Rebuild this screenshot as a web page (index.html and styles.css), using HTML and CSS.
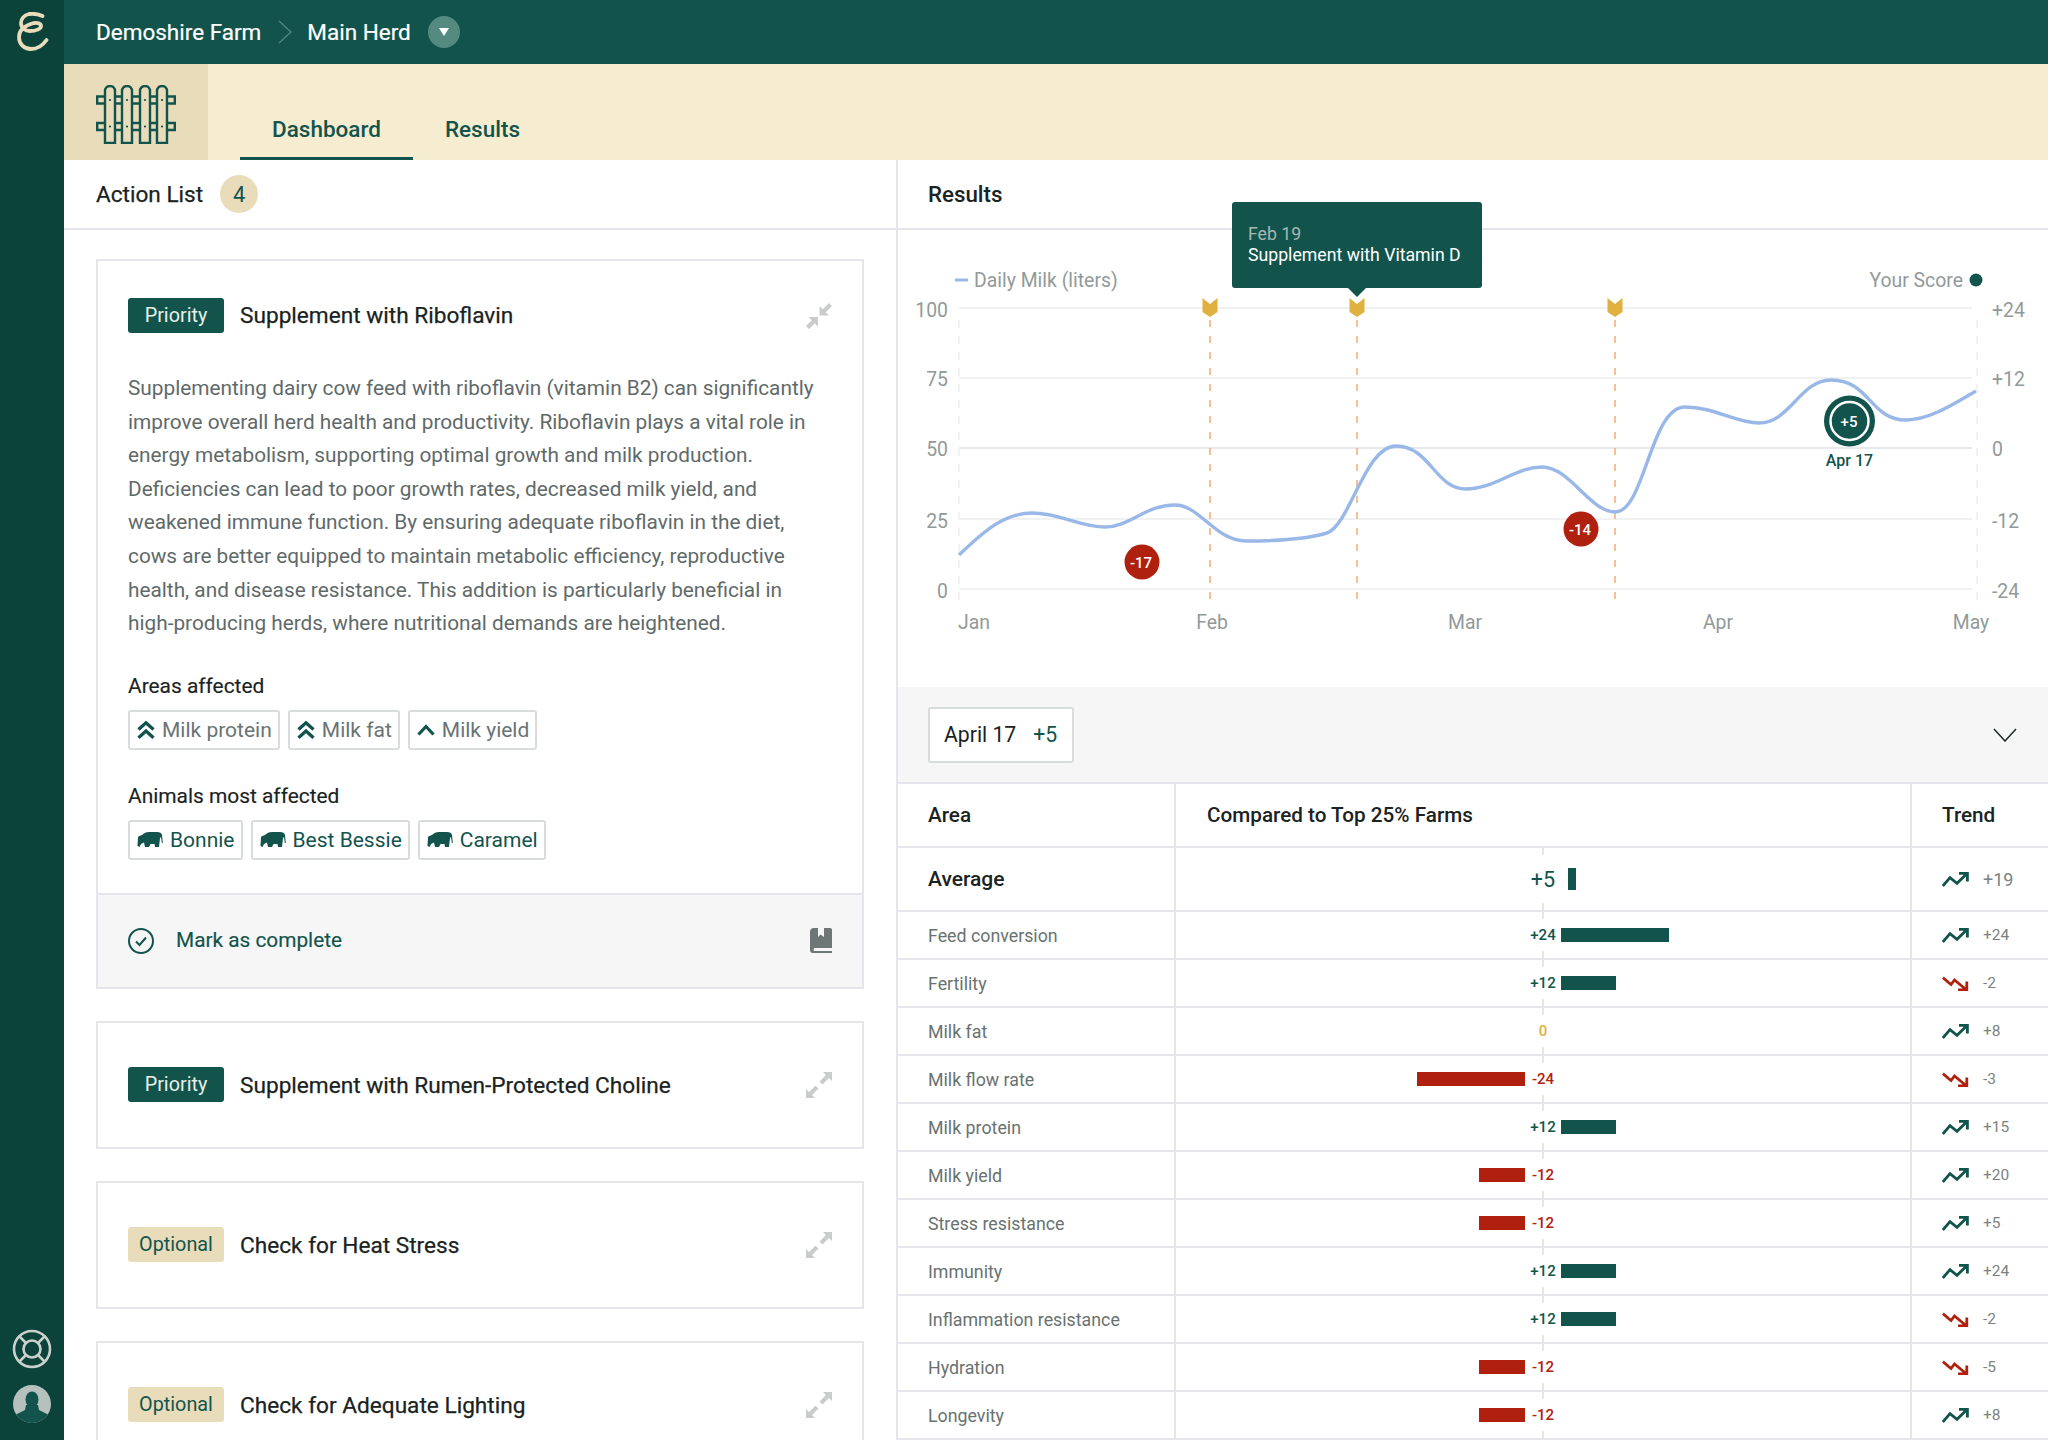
FILE: index.html
```html
<!DOCTYPE html>
<html lang="en">
<head>
<meta charset="utf-8">
<title>Demoshire Farm</title>
<link rel="stylesheet" href="styles.css">
</head>
<body>
<svg class="defs" width="0" height="0" aria-hidden="true">
  <symbol id="i-dbl" viewBox="0 0 18 18"><path d="M1.500 8.500 9 1.800l7.500 6.700M1.500 16.800 9 10l7.500 6.800" fill="none" stroke="currentColor" stroke-width="3.300"/></symbol>
  <symbol id="i-one" viewBox="0 0 18 12"><path d="M1.500 10.500 9 2.500l7.500 8" fill="none" stroke="currentColor" stroke-width="3.200"/></symbol>
  <symbol id="i-cow" viewBox="0 0 26 16"><path d="M.5 14 1 5C1.500 4 3 4 5 3 7 1 9 0 12 0H20C23 0 24.500 1 25 3L25.800 11H24.800L24 5 23 6 22 15H18L17.500 12H13.500L12 15H8L7 10.500 4 12 2.500 15Z" fill="currentColor"/></symbol>
  <symbol id="i-up" viewBox="0 0 27 15"><path d="M.8 14 8 5.700l7 5.600L25 1.500M17 1.400H25.400V9.500" fill="none" stroke="currentColor" stroke-width="2.800"/></symbol>
  <symbol id="i-down" viewBox="0 0 27 15"><path d="M.8 1.700 9 8.500 12.500 4 24 13.500M24.800 5.500V13.800H16" fill="none" stroke="currentColor" stroke-width="2.800"/></symbol>
  <symbol id="i-expand" viewBox="0 0 26 26"><path d="M17 0h9v9l-3-3-6.500 6.500-3-3L20 3ZM9 26H0v-9l3 3 6.500-6.500 3 3L6 23Z" fill="currentColor"/></symbol>
  <symbol id="i-collapse" viewBox="0 0 26 26"><path d="M13.500 3v9.500H23l-3.300-3.300L26 3l-3-3-6.200 6.300ZM12 14H2.500l3.300 3.300L0 23l3 3 5.800-5.800L12 23.500Z" fill="currentColor"/></symbol>
</svg>

<div class="app">
  <nav class="rail">
    <svg class="logo" width="34" height="42" viewBox="0 0 34 42"><path d="M26.500 4C22 2 17 1.500 13 2 8 3 5 7 5 11 5 16 9 19 14 19 20 19 25 17 25 14 25 11 20 10 16 11.500 8 14 3 19 3 25 3 32 8 37 15 37 21 37 27 33 30.500 28" fill="none" stroke="#e8dcbb" stroke-width="3.800" stroke-linecap="round"/></svg>
    <div class="rail-bottom">
      <svg width="40" height="40" viewBox="0 0 40 40"><g fill="none" stroke="#c9d0cd" stroke-width="2.600"><circle cx="20" cy="20" r="18"/><circle cx="20" cy="20" r="8.500"/><path d="m7.500 7.500 6.500 6.500M32.500 7.500 26 14M7.500 32.500 14 26M32.500 32.500 26 26"/></g></svg>
      <svg width="40" height="40" viewBox="0 0 40 40"><defs><clipPath id="av"><circle cx="20" cy="20" r="19"/></clipPath></defs><circle cx="20" cy="20" r="19" fill="#b6c1be"/><g clip-path="url(#av)" fill="#12544c"><ellipse cx="20" cy="15.500" rx="6.500" ry="8"/><path d="M14 21h12l1 5 12 6v10H1V32l12-6Z"/></g></svg>
    </div>
  </nav>

  <div class="main">
    <header class="topbar">
      <span class="crumb">Demoshire Farm</span>
      <svg class="crumb-sep" width="14" height="24" viewBox="0 0 14 24"><path d="m1 1 12 11L1 23" fill="none" stroke="#4d8479" stroke-width="1.500"/></svg>
      <span class="crumb">Main Herd</span>
      <span class="crumb-drop"></span>
    </header>

    <div class="subnav">
      <div class="farm-tile">
        <svg width="80" height="59" viewBox="0 0 80 59">
          <g fill="none" stroke="#12544c" stroke-width="2.400">
            <path d="M9 11.500H1.200v7H9M19 11.500h7M36 11.500h8M54 11.500h7M71 11.500h7.800v7H71M61 18.500h-7M44 18.500h-8M26 18.500h-7"/>
            <path d="M9 38H1.200v7H9M19 38h7M36 38h8M54 38h7M71 38h7.800v7H71M61 45h-7M44 45h-8M26 45h-7"/>
            <path d="M9 58V6a5 5 0 0 1 10 0v52ZM26 58V6a5 5 0 0 1 10 0v52ZM44 58V6a5 5 0 0 1 10 0v52ZM61 58V6a5 5 0 0 1 10 0v52Z"/>
          </g>
          <g fill="#12544c"><circle cx="14" cy="15" r="1.100"/><circle cx="31" cy="15" r="1.100"/><circle cx="49" cy="15" r="1.100"/><circle cx="66" cy="15" r="1.100"/><circle cx="14" cy="41.500" r="1.100"/><circle cx="31" cy="41.500" r="1.100"/><circle cx="49" cy="41.500" r="1.100"/><circle cx="66" cy="41.500" r="1.100"/></g>
        </svg>
      </div>
      <div class="tabs">
        <a class="tab tab-active">Dashboard</a>
        <a class="tab">Results</a>
      </div>
    </div>

    <div class="content">
      <section class="left">
        <div class="panel-head">
          <h2 class="panel-title">Action List</h2>
          <span class="count">4</span>
        </div>
        <div class="cards">
          <article class="card">
            <div class="card-head">
              <span class="chip chip-priority">Priority</span>
              <h3 class="card-title">Supplement with Riboflavin</h3>
              <svg class="card-toggle" width="26" height="26"><use href="#i-collapse"/></svg>
            </div>
            <p class="card-text">Supplementing dairy cow feed with riboflavin (vitamin B2) can significantly improve overall herd health and productivity. Riboflavin plays a vital role in energy metabolism, supporting optimal growth and milk production. Deficiencies can lead to poor growth rates, decreased milk yield, and weakened immune function. By ensuring adequate riboflavin in the diet, cows are better equipped to maintain metabolic efficiency, reproductive health, and disease resistance. This addition is particularly beneficial in high-producing herds, where nutritional demands are heightened.</p>
            <h4 class="tag-label">Areas affected</h4>
            <div class="tags">
              <span class="tag"><svg class="tag-icon" width="18" height="18"><use href="#i-dbl"/></svg>Milk protein</span>
              <span class="tag"><svg class="tag-icon" width="18" height="18"><use href="#i-dbl"/></svg>Milk fat</span>
              <span class="tag"><svg class="tag-icon" width="18" height="12"><use href="#i-one"/></svg>Milk yield</span>
            </div>
            <h4 class="tag-label">Animals most affected</h4>
            <div class="tags">
              <span class="tag tag-cow"><svg class="tag-icon" width="26" height="16"><use href="#i-cow"/></svg>Bonnie</span>
              <span class="tag tag-cow"><svg class="tag-icon" width="26" height="16"><use href="#i-cow"/></svg>Best Bessie</span>
              <span class="tag tag-cow"><svg class="tag-icon" width="26" height="16"><use href="#i-cow"/></svg>Caramel</span>
            </div>
            <div class="card-foot">
              <svg width="26" height="26" viewBox="0 0 26 26"><circle cx="13" cy="13" r="12" fill="none" stroke="#12544c" stroke-width="2"/><path d="m8 13.500 3.500 3.500L18 9.500" fill="none" stroke="#12544c" stroke-width="2"/></svg>
              <span class="complete">Mark as complete</span>
              <svg class="book" width="22" height="25" viewBox="0 0 22 25"><path d="M4 0H8V9L10.500 6.500 14 9V0H20A2 2 0 0 1 22 1.500V20H5A1.500 1.500 0 0 0 5 23H22V25H3A3 3 0 0 1 0 22V4A4 4 0 0 1 4 0Z" fill="#6f7776"/></svg>
            </div>
          </article>

          <article class="card card-closed">
            <div class="card-head">
              <span class="chip chip-priority">Priority</span>
              <h3 class="card-title">Supplement with Rumen-Protected Choline</h3>
              <svg class="card-toggle" width="26" height="26"><use href="#i-expand"/></svg>
            </div>
          </article>
          <article class="card card-closed">
            <div class="card-head">
              <span class="chip chip-optional">Optional</span>
              <h3 class="card-title">Check for Heat Stress</h3>
              <svg class="card-toggle" width="26" height="26"><use href="#i-expand"/></svg>
            </div>
          </article>
          <article class="card card-closed">
            <div class="card-head">
              <span class="chip chip-optional">Optional</span>
              <h3 class="card-title">Check for Adequate Lighting</h3>
              <svg class="card-toggle" width="26" height="26"><use href="#i-expand"/></svg>
            </div>
          </article>
        </div>
      </section>

      <section class="right">
        <div class="panel-head">
          <h2 class="panel-title panel-title-strong">Results</h2>
        </div>

        <div class="chart">
          <svg class="chart-svg" width="1150" height="457" viewBox="898 230 1150 457">
            <g class="grid">
              <path d="M959 308H1972M959 378H1972M959 519H1972M959 589H1972"/>
              <path class="grid-mid" d="M959 448H1972"/>
              <path class="grid-v" d="M959 320V602M1977 320V602"/>
            </g>
            <path class="event-line" d="M1210 320V602M1357 320V602M1615 320V602"/>
            <g class="marker">
              <path d="M1202.500 298 1210 304 1217.500 298V312L1210 317 1202.500 312Z"/>
              <path d="M1349.500 298 1357 304 1364.500 298V312L1357 317 1349.500 312Z"/>
              <path d="M1607.500 298 1615 304 1622.500 298V312L1615 317 1607.500 312Z"/>
            </g>
            <path class="curve" d="M959 555C985 530 1005 513 1032 513C1060 513 1080 527 1105 527C1130 527 1145 505 1175 505C1200 505 1215 541 1246 541C1265 541 1300 541 1327 533C1350 525 1365 446 1396 446C1430 446 1435 489 1466 489C1495 489 1515 467 1542 467C1570 467 1590 512 1615 512C1645 512 1650 407 1685 407C1715 407 1735 423 1759 423C1790 423 1800 380 1831 380C1870 380 1870 420 1906 420C1930 420 1955 403 1976 391"/>

            <path class="legend-dash" d="M955 280H968"/>
            <text class="axis" x="974" y="287">Daily Milk (liters)</text>
            <text class="axis" x="1963" y="287" text-anchor="end">Your Score</text>
            <circle class="score-dot" cx="1976" cy="280" r="6.500"/>

            <g class="axis" text-anchor="end">
              <text x="948" y="317">100</text><text x="948" y="386">75</text><text x="948" y="456">50</text><text x="948" y="528">25</text><text x="948" y="598">0</text>
            </g>
            <g class="axis">
              <text x="1992" y="317">+24</text><text x="1992" y="386">+12</text><text x="1992" y="456">0</text><text x="1992" y="528">-12</text><text x="1992" y="598">-24</text>
            </g>
            <g class="axis" text-anchor="middle">
              <text x="974" y="629">Jan</text><text x="1212" y="629">Feb</text><text x="1465" y="629">Mar</text><text x="1718" y="629">Apr</text><text x="1971" y="629">May</text>
            </g>

            <circle class="dot-bad" cx="1142" cy="562" r="17.500"/>
            <text class="dot-text" x="1141" y="567.500" text-anchor="middle">-17</text>
            <circle class="dot-bad" cx="1581" cy="529" r="17.500"/>
            <text class="dot-text" x="1580" y="534.500" text-anchor="middle">-14</text>
            <circle class="dot-good" cx="1849.500" cy="421" r="25.500"/>
            <circle class="dot-ring" cx="1849.500" cy="421" r="19"/>
            <text class="dot-text" x="1849" y="426.500" text-anchor="middle">+5</text>
            <text class="dot-date" x="1849.500" y="466" text-anchor="middle">Apr 17</text>
          </svg>
          <div class="tooltip">
            <div class="tooltip-date">Feb 19</div>
            <div class="tooltip-text">Supplement with Vitamin D</div>
          </div>
        </div>

        <div class="date-bar">
          <div class="date-pill"><span>April 17</span><span class="date-score">+5</span></div>
          <svg width="24" height="14" viewBox="0 0 24 14"><path d="m1 1 11 12L23 1" fill="none" stroke="#1f2a28" stroke-width="1.500"/></svg>
        </div>

        <div class="table">
          <div class="row row-head">
            <div class="cell c-area">Area</div>
            <div class="cell c-comp c-comp-head">Compared to Top 25% Farms</div>
            <div class="cell c-trend">Trend</div>
          </div>
          <div class="row row-avg">
            <div class="cell c-area">Average</div>
            <div class="cell c-comp"><div class="half"></div><span class="val good">+5</span><div class="half"><i class="bar bar-good bar-avg"></i></div></div>
            <div class="cell c-trend"><svg class="good" width="27" height="15"><use href="#i-up"/></svg><span>+19</span></div>
          </div>
          <div class="row">
            <div class="cell c-area">Feed conversion</div>
            <div class="cell c-comp"><div class="half"></div><span class="val good">+24</span><div class="half"><i class="bar bar-good" style="width:108px"></i></div></div>
            <div class="cell c-trend"><svg class="good" width="27" height="15"><use href="#i-up"/></svg><span>+24</span></div>
          </div>
          <div class="row">
            <div class="cell c-area">Fertility</div>
            <div class="cell c-comp"><div class="half"></div><span class="val good">+12</span><div class="half"><i class="bar bar-good" style="width:55px"></i></div></div>
            <div class="cell c-trend"><svg class="bad" width="27" height="15"><use href="#i-down"/></svg><span>-2</span></div>
          </div>
          <div class="row">
            <div class="cell c-area">Milk fat</div>
            <div class="cell c-comp"><div class="half"></div><span class="val zero">0</span><div class="half"></div></div>
            <div class="cell c-trend"><svg class="good" width="27" height="15"><use href="#i-up"/></svg><span>+8</span></div>
          </div>
          <div class="row">
            <div class="cell c-area">Milk flow rate</div>
            <div class="cell c-comp"><div class="half half-neg"><i class="bar bar-bad" style="width:108px"></i></div><span class="val bad">-24</span><div class="half"></div></div>
            <div class="cell c-trend"><svg class="bad" width="27" height="15"><use href="#i-down"/></svg><span>-3</span></div>
          </div>
          <div class="row">
            <div class="cell c-area">Milk protein</div>
            <div class="cell c-comp"><div class="half"></div><span class="val good">+12</span><div class="half"><i class="bar bar-good" style="width:55px"></i></div></div>
            <div class="cell c-trend"><svg class="good" width="27" height="15"><use href="#i-up"/></svg><span>+15</span></div>
          </div>
          <div class="row">
            <div class="cell c-area">Milk yield</div>
            <div class="cell c-comp"><div class="half half-neg"><i class="bar bar-bad" style="width:46px"></i></div><span class="val bad">-12</span><div class="half"></div></div>
            <div class="cell c-trend"><svg class="good" width="27" height="15"><use href="#i-up"/></svg><span>+20</span></div>
          </div>
          <div class="row">
            <div class="cell c-area">Stress resistance</div>
            <div class="cell c-comp"><div class="half half-neg"><i class="bar bar-bad" style="width:46px"></i></div><span class="val bad">-12</span><div class="half"></div></div>
            <div class="cell c-trend"><svg class="good" width="27" height="15"><use href="#i-up"/></svg><span>+5</span></div>
          </div>
          <div class="row">
            <div class="cell c-area">Immunity</div>
            <div class="cell c-comp"><div class="half"></div><span class="val good">+12</span><div class="half"><i class="bar bar-good" style="width:55px"></i></div></div>
            <div class="cell c-trend"><svg class="good" width="27" height="15"><use href="#i-up"/></svg><span>+24</span></div>
          </div>
          <div class="row">
            <div class="cell c-area">Inflammation resistance</div>
            <div class="cell c-comp"><div class="half"></div><span class="val good">+12</span><div class="half"><i class="bar bar-good" style="width:55px"></i></div></div>
            <div class="cell c-trend"><svg class="bad" width="27" height="15"><use href="#i-down"/></svg><span>-2</span></div>
          </div>
          <div class="row">
            <div class="cell c-area">Hydration</div>
            <div class="cell c-comp"><div class="half half-neg"><i class="bar bar-bad" style="width:46px"></i></div><span class="val bad">-12</span><div class="half"></div></div>
            <div class="cell c-trend"><svg class="bad" width="27" height="15"><use href="#i-down"/></svg><span>-5</span></div>
          </div>
          <div class="row">
            <div class="cell c-area">Longevity</div>
            <div class="cell c-comp"><div class="half half-neg"><i class="bar bar-bad" style="width:46px"></i></div><span class="val bad">-12</span><div class="half"></div></div>
            <div class="cell c-trend"><svg class="good" width="27" height="15"><use href="#i-up"/></svg><span>+8</span></div>
          </div>
        </div>
      </section>
    </div>
  </div>
</div>
</body>
</html>
```

FILE: styles.css
```css
* { box-sizing: border-box; }
html, body { margin: 0; height: 100%; overflow: hidden; }
body { font-family: Roboto, "Liberation Sans", sans-serif; color: #1a2321; background: #fff; }
.defs { position: absolute; }
h2, h3, h4, p { margin: 0; font-weight: 400; }

.app { display: flex; height: 1440px; overflow: hidden; }

.rail { width: 64px; flex: none; background: #0b433b; display: flex; flex-direction: column; justify-content: space-between; align-items: center; padding: 12px 0 16px; }
.logo { display: block; margin-right: -1px; }
.rail-bottom { display: flex; flex-direction: column; gap: 15px; align-items: center; }
.rail-bottom svg { display: block; }

.main { flex: 1; min-width: 0; display: flex; flex-direction: column; }

.topbar { height: 64px; flex: none; background: #12544c; display: flex; align-items: center; padding-left: 32px; color: #fff; }
.crumb { font-size: 22.500px; -webkit-text-stroke: 0.2px #fff; }
.crumb-sep { margin: 0 15px 0 17px; }
.crumb-drop { width: 32px; height: 32px; margin-left: 17px; border-radius: 50%; background: #558a80; display: flex; align-items: center; justify-content: center; }
.crumb-drop::after { content: ""; border: 5px solid transparent; border-top: 8px solid #fff; border-bottom: 0; }

.subnav { height: 96px; flex: none; background: #f6ecd0; display: flex; }
.farm-tile { width: 144px; background: #e8dcbb; display: flex; align-items: center; justify-content: center; padding-top: 4px; }
.tabs { display: flex; align-items: flex-end; margin-left: 32px; }
.tab { height: 96px; padding: 52px 32px 0; font-size: 22.500px; font-weight: 500; color: #12544c; border-bottom: 3px solid transparent; }
.tab-active { border-bottom-color: #12544c; }

.content { flex: 1; min-height: 0; display: flex; }
.left { width: 834px; flex: none; border-right: 2px solid #e4e6ec; overflow: hidden; }
.right { flex: 1; min-width: 0; overflow: hidden; }

.panel-head { height: 70px; border-bottom: 2px solid #e4e6ec; display: flex; align-items: center; padding-left: 32px; }
.right .panel-head { padding-left: 30px; }
.panel-title { font-size: 22.600px; -webkit-text-stroke: 0.25px currentColor; }
.panel-title-strong { font-size: 22.300px; font-weight: 500; -webkit-text-stroke: 0; }
.count { width: 38px; height: 38px; margin-left: 17px; border-radius: 50%; background: #e8dcbb; color: #12544c; font-size: 22px; display: flex; align-items: center; justify-content: center; }

.cards { padding: 29px 32px 0 32px; display: flex; flex-direction: column; gap: 32px; }
.card { border: 2px solid #e4e6ec; }
.card-closed { height: 128px; display: flex; align-items: center; }
.card-closed .card-head { padding-top: 0; width: 100%; }
.card-closed .card-title { margin-top: 2px; }

.card-head { display: flex; align-items: center; padding: 37px 30px 0; }
.chip { height: 35px; width: 96px; border-radius: 3px; font-size: 19.800px; display: flex; align-items: center; justify-content: center; flex: none; }
.chip-priority { background: #12544c; color: #e8efe9; }
.chip-optional { background: #e8dcbb; color: #12544c; }
.card-title { margin-left: 16px; font-size: 22.650px; flex: 1; -webkit-text-stroke: 0.25px currentColor; }
.card-toggle { color: #c9cccb; display: block; }

.card-text { margin: 39px 30px -1px; font-size: 20.800px; line-height: 33.600px; color: #5f6a69; }
.tag-label { margin: 33px 30px 0; font-size: 20.900px; line-height: 26px; color: #1a2321; -webkit-text-stroke: 0.15px currentColor; }
.tags { margin: 11px 30px 0; display: flex; gap: 8px; }
.tag { height: 40px; padding: 0 6px 0 7px; border: 2px solid #d9dcdc; border-radius: 3px; font-size: 21px; color: #6a7373; display: flex; align-items: center; gap: 7px; }
.tag-icon { color: #12544c; display: block; flex: none; }
.tag-cow { color: #12544c; }
.card-foot { margin-top: 33px; height: 94px; border-top: 2px solid #e4e6ec; background: #f6f6f6; display: flex; align-items: center; padding: 0 30px; }
.complete { margin-left: 22px; font-size: 20.800px; color: #12544c; flex: 1; margin-top: -2px; -webkit-text-stroke: 0.15px currentColor; }
.book { display: block; }

.chart { position: relative; height: 457px; }
.chart-svg { display: block; }
.grid path { fill: none; stroke: #f0f1f3; stroke-width: 2; }
.grid .grid-mid { stroke: #e8e9ed; }
.grid .grid-v { stroke: #efefef; stroke-width: 1.500; stroke-dasharray: 8 8; }
.event-line { fill: none; stroke: #efb27e; stroke-width: 1.600; stroke-dasharray: 7 9; }
.marker path { fill: #e0b13f; }
.curve { fill: none; stroke: #99b8e8; stroke-width: 3.400; }
.legend-dash { stroke: #99b8e8; stroke-width: 3; }
.axis { font-size: 19.400px; fill: #929a99; font-family: Roboto, "Liberation Sans", sans-serif; }
.score-dot { fill: #12544c; }
.dot-bad { fill: #b0200f; }
.dot-good { fill: #12544c; }
.dot-ring { fill: #12544c; stroke: #fff; stroke-width: 2.500; }
.dot-text { fill: #fff; font-size: 15px; font-weight: 500; }
.dot-date { fill: #12544c; font-size: 16px; font-weight: 500; }

.tooltip { position: absolute; left: 334px; top: -28px; width: 250px; height: 86px; background: #12544c; border-radius: 3px; padding: 22px 16px 0; font-size: 17.700px; line-height: 21px; color: #fff; z-index: 1; }
.tooltip::after { content: ""; position: absolute; left: 116px; top: 86px; border: 9px solid transparent; border-top-color: #12544c; border-bottom: 0; }
.tooltip-date { color: #a6b7b2; }

.date-bar { height: 97px; background: #f6f6f6; border-bottom: 2px solid #e4e6ec; display: flex; align-items: center; justify-content: space-between; padding: 0 31px 0 30px; }
.date-pill { width: 146px; height: 56px; background: #fff; border: 2px solid #d9dcdc; border-radius: 3px; display: flex; align-items: center; gap: 17px; padding-left: 14px; font-size: 21.200px; }
.date-score { color: #12544c; }

.row { display: grid; grid-template-columns: 278px 736px 1fr; height: 48px; border-bottom: 2px solid #e4e6ec; }
.row-head, .row-avg { height: 64px; }
.cell { display: flex; align-items: center; }
.c-area { padding-left: 30px; border-right: 2px solid #e4e6ec; font-size: 17.800px; color: #69726f; }
.c-comp { position: relative; border-right: 2px solid #e4e6ec; }
.c-trend { padding-left: 30px; gap: 14px; font-size: 15.500px; color: #7b8382; }
.c-trend svg { display: block; flex: none; }
.row-head .cell { font-size: 20.700px; font-weight: 500; color: #1a2321; }
.c-comp-head { padding-left: 31px; }
.row-avg .c-area { font-size: 21px; font-weight: 500; color: #1a2321; }
.row-avg .c-trend { font-size: 18px; }

.c-comp:not(.c-comp-head)::before, .c-comp:not(.c-comp-head)::after { content: ""; position: absolute; left: 366px; width: 2px; height: 7px; background: #e4e6ec; }
.c-comp::before { top: 0; }
.c-comp::after { bottom: 0; }
.half { flex: 1; display: flex; }
.half-neg { justify-content: flex-end; }
.val { width: 36px; flex: none; text-align: center; font-size: 15px; font-weight: 500; }
.row-avg .val { width: 50px; font-size: 21.500px; font-weight: 400; }
.bar { display: block; height: 14px; }
.bar-good { background: #12544c; }
.bar-bad { background: #b0200f; }
.bar-avg { width: 8px; height: 22px; }
.good { color: #12544c; }
.bad { color: #b0200f; }
.zero { color: #e0b13f; }
```
